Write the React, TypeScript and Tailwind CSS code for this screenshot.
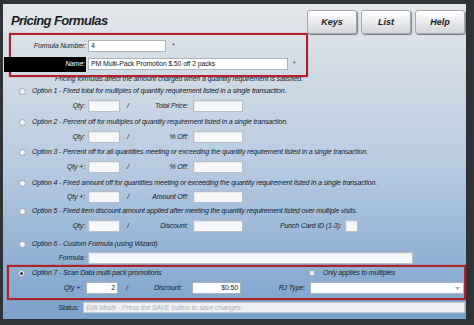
import clsx from "clsx";
import type { ReactNode } from "react";

const Radio = ({ checked }: { checked?: boolean }) => (
  <span className="flex h-[7px] w-[7px] shrink-0 items-center justify-center rounded-full border border-[#9ca8b5] bg-[#f3f5f8]">
    {checked && <span className="h-[3px] w-[3px] rounded-full bg-[#27303b]" />}
  </span>
);

const Box = ({ className, children }: { className?: string; children?: ReactNode }) => (
  <div
    className={clsx(
      "flex h-[12px] items-center border border-[#b6bfc9] bg-[#f6f7f9] px-[2px] shadow-[inset_1px_1px_0_rgba(0,0,0,0.06)]",
      className
    )}
  >
    {children}
  </div>
);

const OptionRow = ({ text, className }: { text: string; className?: string }) => (
  <div className={clsx("flex h-[10px] items-center pl-[16px]", className)}>
    <Radio />
    <span className="ml-[6px] whitespace-nowrap italic">{text}</span>
  </div>
);

const FieldRow = ({
  first,
  second,
  extra,
  className,
}: {
  first: string;
  second: string;
  extra?: ReactNode;
  className?: string;
}) => (
  <div className={clsx("flex h-[12px] items-center", className)}>
    <span className="w-[82px] text-right italic">{first}</span>
    <Box className="ml-[3px] w-[32px]" />
    <span className="w-[16px] text-center italic">/</span>
    <span className="w-[52px] text-right italic">{second}</span>
    <Box className="ml-[5px] w-[50px]" />
    {extra}
  </div>
);

const App = () => {
  return (
    <div className="h-[325px] w-[474px] overflow-hidden bg-[#2f3337] pb-[6px] pl-[3px] pr-[8px] pt-[4px] font-['Liberation_Sans',Arial,sans-serif] text-[7px] leading-[10px] tracking-[-0.15px] text-[#161d28]">
      <div className="flex h-full flex-col bg-linear-to-b from-[#e4e6e9] via-[#b8cce1] via-50% to-[#7ba1cb]">
        {/* header */}
        <div className="flex h-[29px] items-start justify-between">
          <h1 className="ml-[8px] mt-[9px] text-[13px] font-bold italic leading-[15px] tracking-[-0.6px] text-[#1b1e23]">
            Pricing Formulas
          </h1>
          <div className="mr-[1px] mt-[6px] flex gap-[4px]">
            {["Keys", "List", "Help"].map((b) => (
              <button
                key={b}
                className="h-[24px] w-[50px] rounded-[3px] border border-[#a3a8ae] bg-linear-to-b from-white to-[#d3d6da] text-[9px] font-bold italic tracking-normal text-[#1e232a] shadow-[1px_1px_1px_rgba(0,0,0,0.45)]"
              >
                {b}
              </button>
            ))}
          </div>
        </div>

        {/* formula identity */}
        <div className="relative z-10 ml-[6px] h-[44px] w-[299px] border-2 border-[#b3202b] pt-[5px] shadow-[0_0_1px_rgba(140,0,0,0.6)]">
          <div className="flex h-[12px] items-center">
            <span className="w-[75px] text-right italic">Formula Number:</span>
            <div className="ml-[2px] flex h-[12px] w-[78px] items-center border border-[#aab3bd] bg-white px-[2px]">4</div>
            <span className="ml-[6px] text-[#5a3a3a]">*</span>
          </div>
          <div className="mt-[6px] flex h-[12px] items-center">
            <span className="-ml-[7px] flex h-[15px] w-[82px] shrink-0 items-center justify-end bg-black pr-[1px] italic text-white">
              Name:
            </span>
            <div className="ml-[2px] flex h-[12px] w-[200px] items-center border border-[#aab3bd] bg-white px-[2px]">
              PM Multi-Pack Promotion $.50 off 2 packs
            </div>
            <span className="ml-[5px] text-[#5a3a3a]">*</span>
          </div>
        </div>
        <p className="-mt-[3px] h-[9px] whitespace-nowrap pl-[52px] italic leading-[9px]">
          Pricing formulas affect the amount charged when a quantity requirement is satisfied.
        </p>

        <OptionRow className="mt-[3px]" text="Option 1 - Fixed total for multiples of quantity requirement listed in a single transaction." />
        <FieldRow className="mt-[4px]" first="Qty:" second="Total Price:" />

        <OptionRow className="mt-[5px]" text="Option 2 - Percent off for multiples of quantity requirement listed in a single transaction." />
        <FieldRow className="mt-[4px]" first="Qty:" second="% Off:" />

        <OptionRow
          className="mt-[4px]"
          text="Option 3 - Percent off for all quantities meeting or exceeding the quantity requirement listed in a single transaction."
        />
        <FieldRow className="mt-[4px]" first="Qty +:" second="% Off:" />

        <OptionRow
          className="mt-[5px]"
          text="Option 4 - Fixed amount off for quantities meeting or exceeding the quantity requirement listed in a single transaction."
        />
        <FieldRow className="mt-[3px]" first="Qty +:" second="Amount Off:" />

        <OptionRow
          className="mt-[3px]"
          text="Option 5 - Fixed item discount amount applied after meeting the quantity requirement listed over multiple visits."
        />
        <FieldRow
          className="mt-[4px]"
          first="Qty:"
          second="Discount:"
          extra={
            <>
              <span className="ml-[37px] italic">Punch Card ID (1-3):</span>
              <Box className="ml-[3px] w-[13px]" />
            </>
          }
        />

        <OptionRow className="mt-[7px]" text="Option 6 - Custom Formula (using Wizard)" />
        <div className="mt-[3px] flex h-[11px] items-center">
          <span className="w-[82px] text-right italic">Formula:</span>
          <Box className="ml-[3px] h-[11px] w-[325px]" />
        </div>

        {/* scan data */}
        <div className="ml-[4px] mt-[2px] h-[35px] border-2 border-[#b3202b] pt-[1px] shadow-[0_0_1px_rgba(140,0,0,0.6)]">
          <div className="flex h-[10px] items-center">
            <div className="flex w-[300px] items-center pl-[9px]">
              <Radio checked />
              <span className="ml-[7px] italic">Option 7 - Scan Data multi-pack promotions</span>
            </div>
            <span className="h-[6px] w-[6px] border border-[#9ca8b5] bg-[#eef1f4]" />
            <span className="ml-[8px] italic">Only applies to multiples</span>
          </div>
          <div className="mt-[4px] flex h-[12px] items-center">
            <span className="w-[73px] text-right italic">Qty +:</span>
            <div className="ml-[4px] flex h-[12px] w-[32px] items-center justify-end border border-[#aab3bd] bg-white px-[2px]">2</div>
            <span className="w-[18px] text-center italic">/</span>
            <span className="w-[46px] text-right italic">Discount:</span>
            <div className="ml-[10px] flex h-[12px] w-[49px] items-center justify-end border border-[#aab3bd] bg-white px-[2px]">
              $0.50
            </div>
            <span className="w-[64px] text-right italic">RJ Type:</span>
            <div className="ml-[5px] flex h-[12px] w-[154px] items-center justify-end border border-[#aab3bd] bg-white pr-[3px]">
              <svg width="5" height="3" viewBox="0 0 5 3">
                <path d="M0 0 L5 0 L2.5 3 Z" fill="#a9b0b8" />
              </svg>
            </div>
          </div>
        </div>

        <div className="mt-[2px] flex h-[11px] items-center">
          <span className="w-[76px] text-right italic">Status:</span>
          <div className="ml-[4px] mr-[1px] flex h-[11px] flex-1 items-center border border-[#c3c9d0] bg-[#eef0f3] px-[2px] italic text-[#aeb4bb]">
            Edit Mode - Press the SAVE button to save changes.
          </div>
        </div>
      </div>
    </div>
  );
};

export default App;
